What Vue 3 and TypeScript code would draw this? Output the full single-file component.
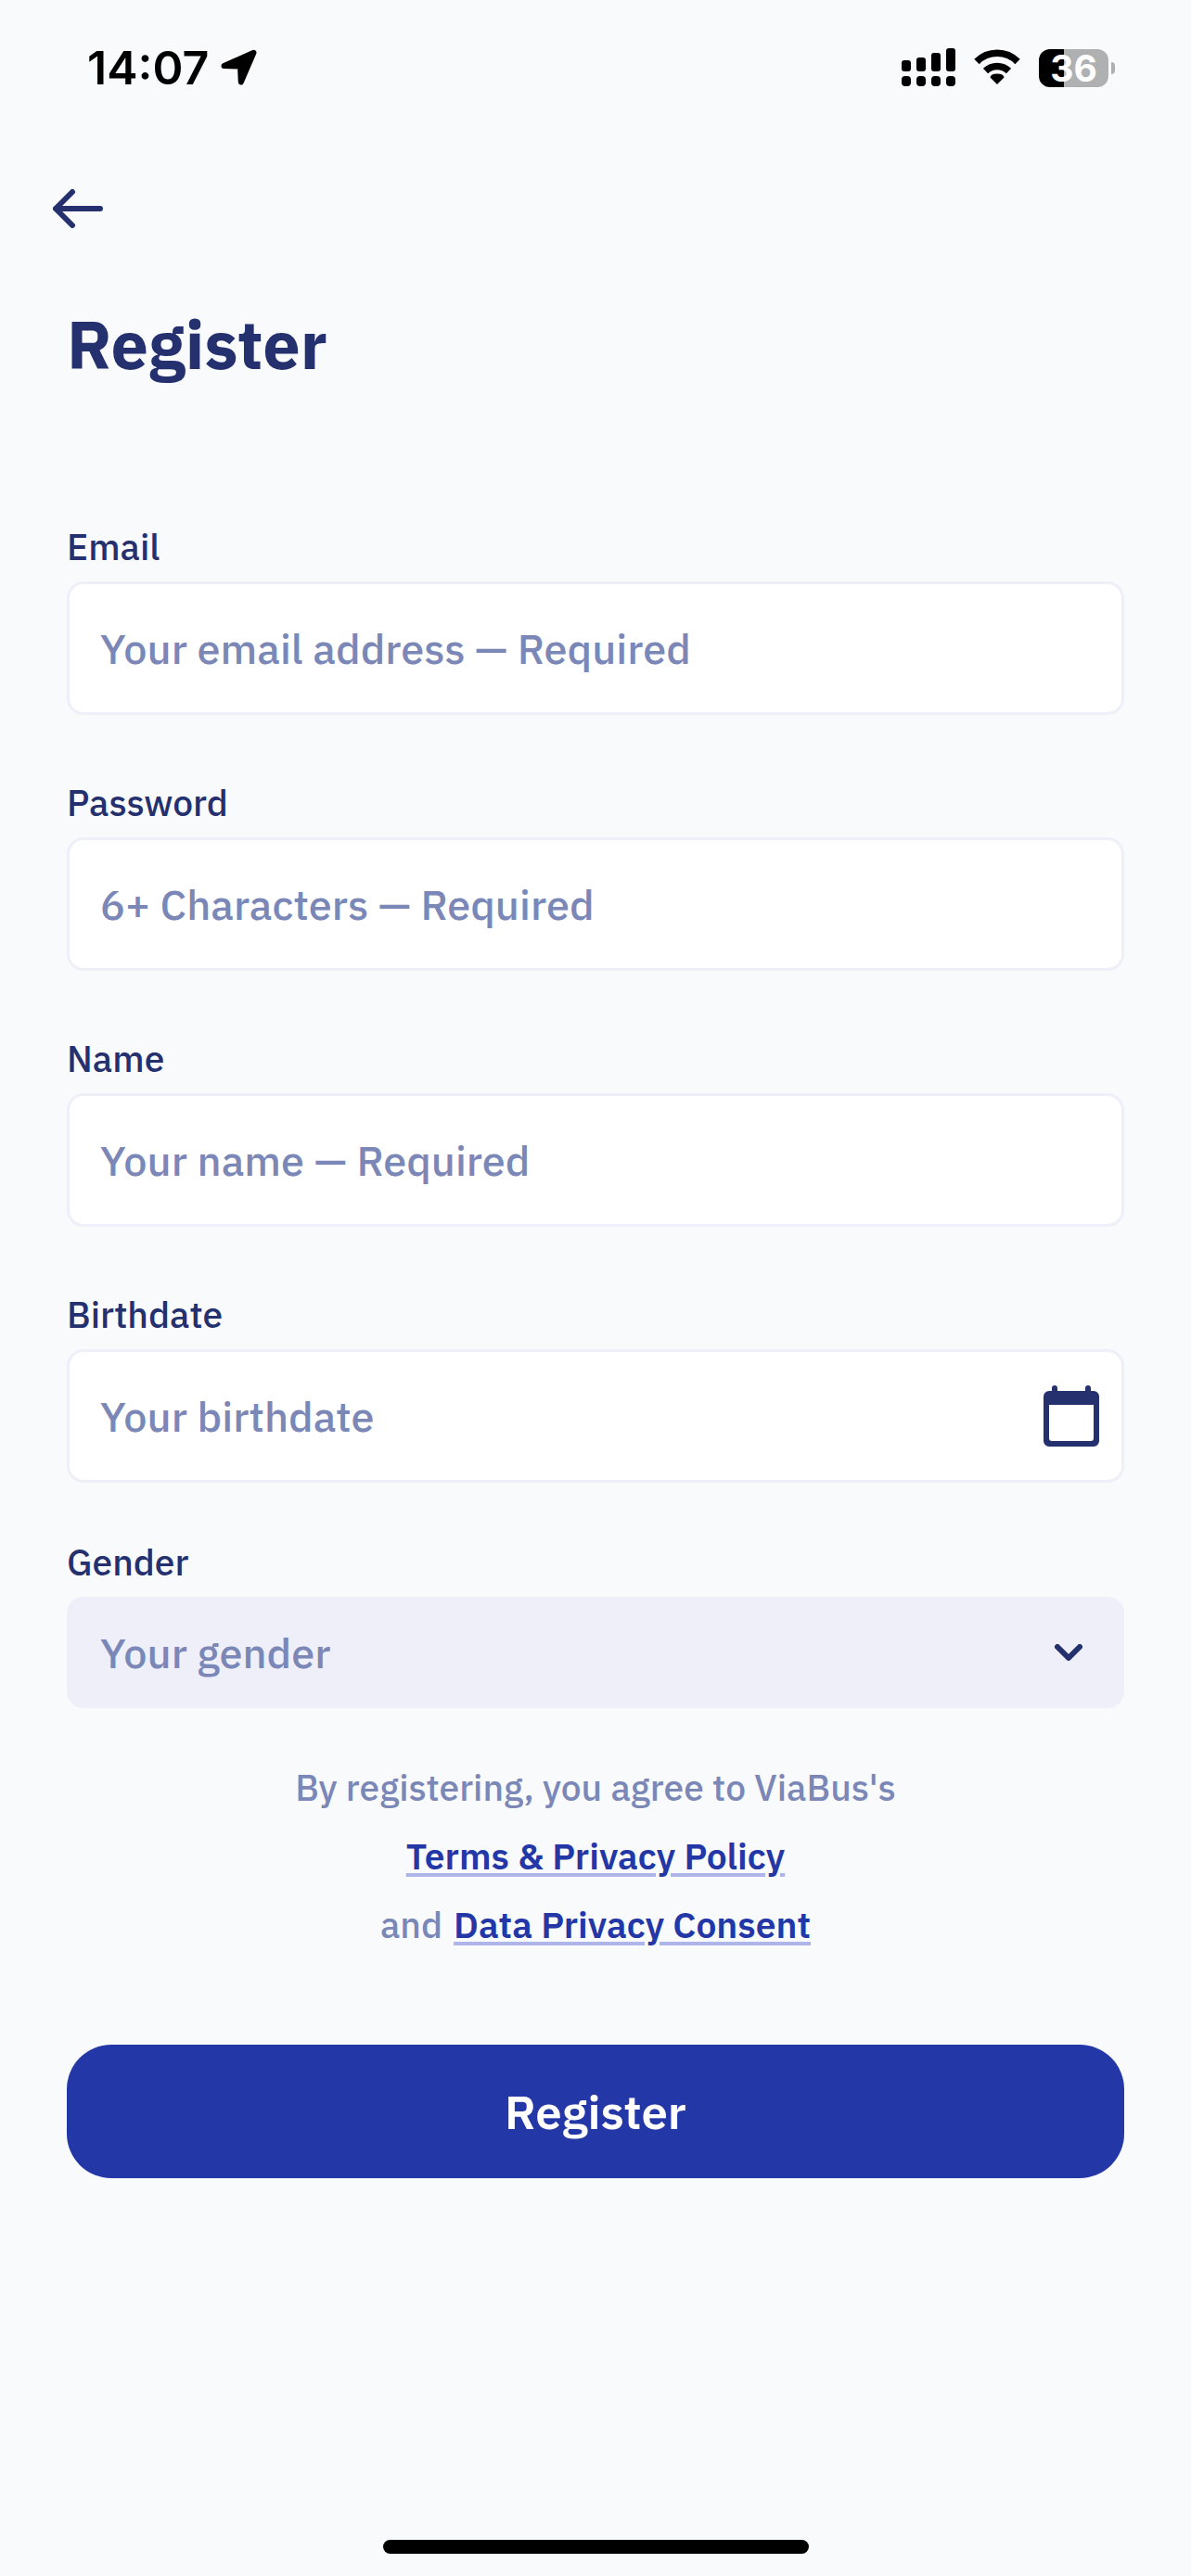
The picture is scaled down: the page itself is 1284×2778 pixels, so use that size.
<script setup lang="ts">
import { reactive } from 'vue'

interface Field {
  id: 'email' | 'password' | 'name' | 'birthdate'
  label: string
  type: string
  placeholder: string
  calendar?: boolean
}

const fields: Field[] = [
  { id: 'email', label: 'Email', type: 'email', placeholder: 'Your email address — Required' },
  { id: 'password', label: 'Password', type: 'password', placeholder: '6+ Characters — Required' },
  { id: 'name', label: 'Name', type: 'text', placeholder: 'Your name — Required' },
  { id: 'birthdate', label: 'Birthdate', type: 'text', placeholder: 'Your birthdate', calendar: true },
]

const form = reactive({ email: '', password: '', name: '', birthdate: '', gender: '' })
</script>

<template>
  <div class="screen">
    <header class="status">
      <div class="status-left">
        <span class="time">14:07</span>
        <svg class="location" width="40" height="40" viewBox="0 0 40 40" aria-hidden="true">
          <path d="M3.5 18 35.5 3.8 21.8 35.5 21 18.5Z" fill="#000" stroke="#000" stroke-width="6" stroke-linejoin="round" />
        </svg>
      </div>
      <div class="status-right">
        <svg width="58" height="42" viewBox="0 0 58 42" aria-hidden="true">
          <rect x="0" y="13" width="10" height="12" rx="3" />
          <rect x="16" y="10" width="10" height="15" rx="3" />
          <rect x="32" y="5" width="10" height="20" rx="3" />
          <rect x="48" y="0" width="10" height="25" rx="3" />
          <rect x="0" y="30" width="10" height="11" rx="4" />
          <rect x="16" y="30" width="10" height="11" rx="4" />
          <rect x="32" y="30" width="10" height="11" rx="4" />
          <rect x="48" y="30" width="10" height="11" rx="4" />
        </svg>
        <svg width="50" height="42" viewBox="0 0 50 42" aria-hidden="true">
          <path d="M25 39 17.5 31.5Q18 27.5 25 27.5T32.5 31.5Z" />
          <path d="M12.5 24.5A18 18 0 0 1 37.5 24.5" fill="none" stroke="#000" stroke-width="7.5" />
          <path d="M3 14.5A31 31 0 0 1 47 14.5" fill="none" stroke="#000" stroke-width="7.5" />
        </svg>
        <div class="battery">
          <span class="level">36</span>
          <span class="nub"></span>
        </div>
      </div>
    </header>

    <nav class="nav">
      <button class="back" type="button" aria-label="Back">
        <svg width="54" height="42" viewBox="0 0 54 42" aria-hidden="true">
          <path d="M21 3 3 21 21 39M3 21H51" fill="none" stroke="#25306f" stroke-width="6" stroke-linecap="round" stroke-linejoin="round" />
        </svg>
      </button>
    </nav>

    <main>
      <h1>Register</h1>
      <form @submit.prevent>
        <div v-for="f in fields" :key="f.id" class="field">
          <label :for="f.id">{{ f.label }}</label>
          <div class="box">
            <input :id="f.id" v-model="form[f.id]" :type="f.type" :placeholder="f.placeholder" />
            <button v-if="f.calendar" class="calendar" type="button" aria-label="Choose date">
              <svg width="60" height="66" viewBox="0 0 60 66" aria-hidden="true">
                <path fill="#25306f" fill-rule="evenodd" d="M6 6H9V3a3 3 0 0 1 6 0V6H45V3a3 3 0 0 1 6 0V6H54a6 6 0 0 1 6 6V60a6 6 0 0 1-6 6H6a6 6 0 0 1-6-6V12A6 6 0 0 1 6 6ZM6 21V57a3 3 0 0 0 3 3H51a3 3 0 0 0 3-3V21Z" />
              </svg>
            </button>
          </div>
        </div>

        <div class="field last">
          <label for="gender">Gender</label>
          <div class="picker">
            <select id="gender" v-model="form.gender">
              <option value="" disabled>Your gender</option>
              <option>Female</option>
              <option>Male</option>
              <option>Other</option>
            </select>
            <svg class="chevron" width="30" height="18" viewBox="0 0 30 18" aria-hidden="true">
              <path d="M3 3 15 15 27 3" fill="none" stroke="#25306f" stroke-width="6" stroke-linecap="round" stroke-linejoin="round" />
            </svg>
          </div>
        </div>

        <div class="terms">
          <p>By registering, you agree to ViaBus's</p>
          <p><a href="#terms">Terms &amp; Privacy Policy</a></p>
          <p class="joined"><span>and</span><a href="#consent">Data Privacy Consent</a></p>
        </div>

        <button class="submit" type="submit">Register</button>
      </form>
    </main>

    <div class="home"></div>
  </div>
</template>

<style>
body {
  margin: 0;
  background: #f9fafc;
}
</style>

<style scoped>
.screen {
  min-height: 100vh;
  display: flex;
  flex-direction: column;
  box-sizing: border-box;
  padding-bottom: 24px;
  background: #f9fafc;
  color: #25306f;
  font-family: "IBM Plex Sans", Roboto, sans-serif;
  font-weight: 500;
}
.status {
  display: flex;
  align-items: center;
  justify-content: space-between;
  height: 146px;
  padding: 0 82px 0 94px;
  font-family: Inter, sans-serif;
}
.status-left,
.status-right {
  display: flex;
  align-items: center;
}
.status-left {
  gap: 13px;
}
.status-right {
  gap: 20px;
}
.time {
  color: #000;
  font-size: 50px;
  font-weight: 600;
}
.battery {
  display: flex;
  align-items: center;
  gap: 3px;
}
.level {
  width: 75px;
  height: 41px;
  border-radius: 12px;
  background: linear-gradient(to right, #000 36%, #afb0b2 36%);
  color: #fff;
  font-size: 39px;
  font-weight: 700;
  line-height: 41px;
  text-align: center;
}
.nub {
  width: 4px;
  height: 13px;
  border-radius: 0 4px 4px 0;
  background: #afb0b2;
}
.nav {
  display: flex;
  align-items: center;
  height: 158px;
  padding: 0 57px;
}
button {
  padding: 0;
  border: 0;
  background: none;
  font-family: inherit;
}
.back,
.calendar {
  display: flex;
}
main {
  padding: 0 72px;
}
h1 {
  margin: 0 0 117px;
  font-size: 72px;
  font-weight: 700;
  line-height: 134px;
}
.field {
  margin-bottom: 60px;
}
.field:has(.calendar) {
  margin-bottom: 51px;
}
.field.last {
  margin-bottom: 49px;
}
label {
  display: block;
  margin-bottom: 2px;
  font-size: 39px;
  line-height: 70px;
}
.box {
  display: flex;
  align-items: center;
  box-sizing: border-box;
  height: 144px;
  padding: 0 24px 0 33px;
  border: 3px solid #eeeff8;
  border-radius: 18px;
  background: #fff;
}
input {
  flex: 1;
  min-width: 0;
  height: 100%;
  padding: 0;
  border: 0;
  outline: 0;
  background: none;
  color: #25306f;
  font-family: inherit;
  font-size: 45px;
  font-weight: 500;
}
input::placeholder {
  color: #7b88b7;
  opacity: 1;
}
.picker {
  display: grid;
  align-items: center;
}
.picker > * {
  grid-area: 1 / 1;
}
select {
  width: 100%;
  height: 120px;
  padding: 0 36px;
  border: 0;
  border-radius: 18px;
  appearance: none;
  background: #eeeff8;
  color: #7b88b7;
  font-family: inherit;
  font-size: 45px;
  font-weight: 500;
}
.chevron {
  justify-self: end;
  margin-right: 45px;
  pointer-events: none;
}
.terms {
  color: #7b88b7;
  font-size: 39px;
  line-height: 74px;
  text-align: center;
}
.terms p {
  margin: 0;
}
.joined {
  display: flex;
  justify-content: center;
  gap: 12px;
}
a {
  color: #2437a6;
  font-weight: 600;
  text-decoration: underline;
  text-decoration-color: #adb5ea;
  text-decoration-thickness: 4px;
  text-underline-offset: 4px;
}
.submit {
  display: block;
  width: 100%;
  height: 144px;
  margin-top: 92px;
  border-radius: 48px;
  background: #2437a6;
  color: #fff;
  font-size: 51px;
  font-weight: 600;
}
.home {
  width: 36%;
  max-width: 459px;
  height: 15px;
  margin: auto auto 0;
  border-radius: 8px;
  background: #000;
}
</style>
